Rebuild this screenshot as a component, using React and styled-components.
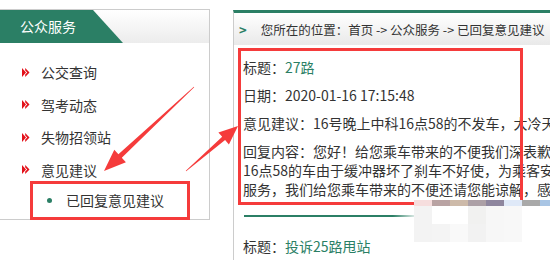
import React from 'react'
import styled, { createGlobalStyle } from 'styled-components'

const GREEN = '#2b7f65'
const RED = '#f53b3b'

const GlobalStyle = createGlobalStyle`
  html, body {
    margin: 0;
    padding: 0;
    background: #fff;
  }
  body {
    font-family: "Noto Sans CJK SC", "Noto Sans", sans-serif;
    font-size: 14px;
    color: #333;
  }
`

const Page = styled.div`
  position: relative;
  width: 550px;
  height: 260px;
  overflow: hidden;
  display: flex;
  align-items: flex-start;
  padding-top: 9px;
  box-sizing: border-box;
`

const Sidebar = styled.div`
  width: 211px;
  height: 211px;
  margin-left: -1px;
  border: 1px solid #ccc;
  box-sizing: border-box;
  flex-shrink: 0;
`

const SideHeader = styled.div`
  position: relative;
  height: 33px;
  background: linear-gradient(to bottom, #fff, #ececec);
  display: flex;
  align-items: center;
  &::before {
    content: '';
    position: absolute;
    inset: 0;
    background: ${GREEN};
    clip-path: polygon(0 0, 93px 0, 123px 100%, 0 100%);
  }
`

const SideTitle = styled.span`
  position: relative;
  padding-left: 20px;
  color: #fff;
  font-size: 14px;
  line-height: 33px;
`

const Menu = styled.ul`
  list-style: none;
  margin: 0;
  padding: 13px 0 0;
`

const MenuItem = styled.li`
  display: flex;
  align-items: center;
  height: 32.5px;
  padding-left: 22px;
  font-size: 14px;
  color: #333;
`

const Chevron = styled.svg`
  width: 8px;
  height: 9px;
  margin-right: 11px;
  flex-shrink: 0;
`

const SubItem = styled.li`
  display: flex;
  align-items: center;
  height: 28px;
  padding-left: 47px;
  font-size: 14px;
  color: #333;
`

const Dot = styled.span`
  width: 5px;
  height: 5px;
  border-radius: 50%;
  background: ${GREEN};
  margin-right: 14px;
`

const Main = styled.div`
  flex: 1;
  min-width: 0;
  margin-left: 23px;
  margin-top: 1px;
  height: 260px;
  border-left: 1px solid #ccc;
  border-top: 3px solid ${GREEN};
  overflow: hidden;
  white-space: nowrap;
`

const Crumbs = styled.div`
  height: 32px;
  display: flex;
  align-items: center;
  padding-left: 5px;
  background: linear-gradient(to bottom, #fff, #e9e9e9);
  font-size: 12.5px;
  color: #333;
`

const CrumbMark = styled.span`
  color: ${GREEN};
  font-size: 13px;
  font-weight: bold;
  margin-right: 14px;
`

const Content = styled.div`
  padding: 13px 0 0 9px;
`

const Line = styled.p`
  margin: 0 0 9px;
  line-height: 19px;
  font-size: 14px;
  color: #333;
`

const Accent = styled.span`
  color: ${GREEN};
`

const Divider = styled.div`
  width: 175px;
  height: 2px;
  margin: 16px 0 20px 1px;
  background: linear-gradient(to right, ${GREEN} 85%, rgba(43, 127, 101, 0));
`

const RedBox = styled.div`
  position: absolute;
  left: ${p => p.$x}px;
  top: ${p => p.$y}px;
  width: ${p => p.$w}px;
  height: ${p => p.$h}px;
  border: 3px solid ${RED};
  box-sizing: border-box;
`

const Overlay = styled.svg`
  position: absolute;
  left: 0;
  top: 0;
  width: 550px;
  height: 260px;
  pointer-events: none;
`

const Mosaic = styled.div`
  position: absolute;
  left: 414px;
  top: 200px;
  display: grid;
  grid-template-columns: repeat(7, 18px) 10px;
  grid-template-rows: 6px 18px 18px;
`

const Cell = styled.div`
  background: ${p => p.$c};
`

const mosaic = [
  ['#f6dede', '#b9a3a3', '#cdbaa9', '#aca0a6', '#8e869e', '#dfe9f8', '#a9a9a9', '#a9c5e4'],
  ['#f3f3f3', '#ffffff', '#ffffff', '#f1f1f0', '#f7f7f7', '#f8f8f8', '#ffffff', '#ffffff'],
  ['#f3f3f3', '#f4f4f4', '#f9f9f9', '#f2f2f2', '#f7f7f7', '#f8f8f8', '#ffffff', '#ffffff'],
]

function arrowPoints([tx, ty], [hx, hy], headLen, headW, tailW, neckW) {
  const dx = hx - tx
  const dy = hy - ty
  const len = Math.hypot(dx, dy)
  const ux = dx / len
  const uy = dy / len
  const nx = -uy
  const ny = ux
  const bx = hx - ux * headLen
  const by = hy - uy * headLen
  const pt = (x, y, w) => `${(x + nx * w).toFixed(1)},${(y + ny * w).toFixed(1)}`
  return [
    pt(tx, ty, tailW / 2),
    pt(bx, by, neckW / 2),
    pt(bx, by, headW / 2),
    `${hx},${hy}`,
    pt(bx, by, -headW / 2),
    pt(bx, by, -neckW / 2),
    pt(tx, ty, -tailW / 2),
  ].join(' ')
}

const menu = ['公交查询', '驾考动态', '失物招领站', '意见建议']

const App = () => (
  <Page>
    <GlobalStyle />
    <Sidebar>
      <SideHeader>
        <SideTitle>公众服务</SideTitle>
      </SideHeader>
      <Menu>
        {menu.map(label => (
          <MenuItem key={label}>
            <Chevron viewBox="0 0 8 9">
              <path d="M0 0 L4 4.5 L0 9 Z M3.2 0 L7.5 4.5 L3.2 9 L3.2 6.6 L5.2 4.5 L3.2 2.4 Z" fill="#e3121b" />
            </Chevron>
            {label}
          </MenuItem>
        ))}
        <SubItem>
          <Dot />
          已回复意见建议
        </SubItem>
      </Menu>
    </Sidebar>

    <Main>
      <Crumbs>
        <CrumbMark>&gt;</CrumbMark>
        您所在的位置：首页 -&gt; 公众服务 -&gt; 已回复意见建议
      </Crumbs>
      <Content>
        <Line>标题：<Accent>27路</Accent></Line>
        <Line>日期：2020-01-16 17:15:48</Line>
        <Line>意见建议：16号晚上中科16点58的不发车，大冷天的让我们等了很久</Line>
        <Line>
          回复内容：您好！给您乘车带来的不便我们深表歉意，经调查<br />
          16点58的车由于缓冲器坏了刹车不好使，为乘客安全考虑停止<br />
          服务，我们给您乘车带来的不便还请您能谅解，感谢您的支持
        </Line>
        <Divider />
        <Line>标题：<Accent>投诉25路甩站</Accent></Line>
      </Content>
    </Main>

    <RedBox $x={238} $y={48} $w={285} $h={157} />
    <RedBox $x={30} $y={181} $w={160} $h={39} />

    <Mosaic>
      {mosaic.flat().map((c, i) => (
        <Cell key={i} $c={c} />
      ))}
    </Mosaic>

    <Overlay viewBox="0 0 550 260">
      <polygon points={arrowPoints([194, 87], [104, 171], 22, 17, 0.6, 5)} fill={RED} />
      <polygon points={arrowPoints([186, 171], [238, 126], 19, 16, 0.6, 4.5)} fill={RED} />
    </Overlay>
  </Page>
)

export default App
